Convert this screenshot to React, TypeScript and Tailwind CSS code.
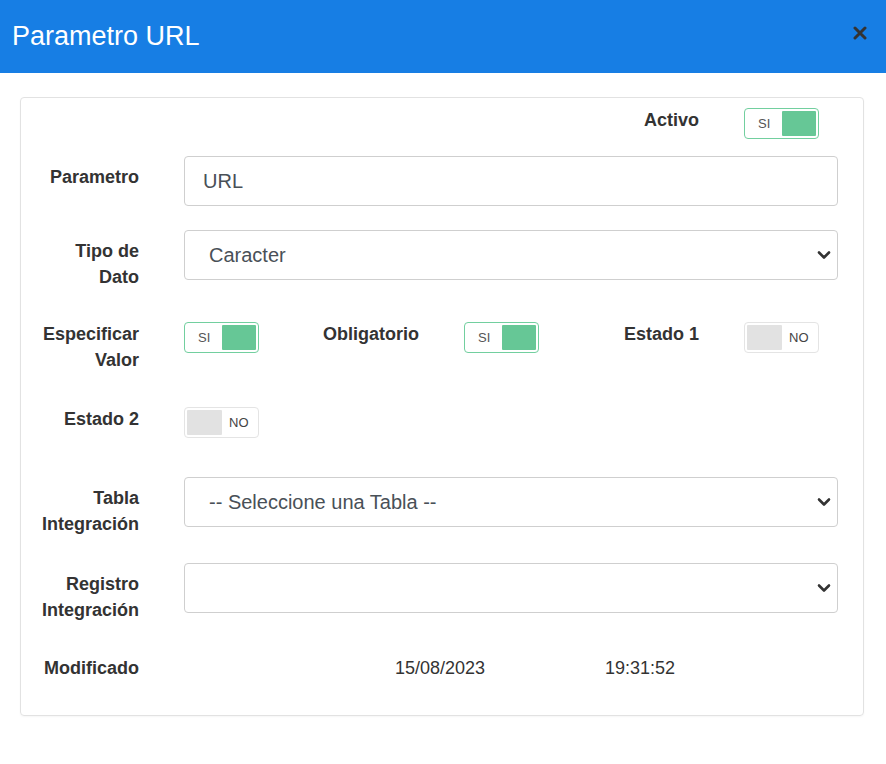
import React from "react";

const font = { fontFamily: '"Liberation Sans", Arial, sans-serif' };

const Toggle: React.FC<{ on: boolean }> = ({ on }) => {
  return on ? (
    <div className="flex w-[75px] h-[31px] shrink-0 rounded-[4px] border border-[#72cf9f] p-[2px]">
      <span className="flex-1 flex items-center justify-center text-[13px] text-[#555]">SI</span>
      <span className="flex-1 rounded-[1px] bg-[#66c796]"></span>
    </div>
  ) : (
    <div className="flex w-[75px] h-[31px] shrink-0 rounded-[4px] border border-[#e4e4e4] p-[2px]">
      <span className="flex-1 rounded-[1px] bg-[#e2e2e2]"></span>
      <span className="flex-1 flex items-center justify-center text-[13px] text-[#444]">NO</span>
    </div>
  );
};

const Label: React.FC<{ children: React.ReactNode; pad?: boolean }> = ({ children, pad }) => (
  <div
    className={
      "w-[100px] shrink-0 text-right text-[18px] leading-[26px] font-bold text-[#333] " +
      (pad ? "pt-[8px]" : "")
    }
  >
    {children}
  </div>
);

const Chevron = () => (
  <svg
    width="14"
    height="9"
    viewBox="0 0 14 9"
    className="pointer-events-none absolute right-[7px] top-1/2 -translate-y-1/2"
  >
    <path d="M2 2 L7 7 L12 2" fill="none" stroke="#333" strokeWidth="2.6" strokeLinecap="round" strokeLinejoin="round" />
  </svg>
);

const Select: React.FC<{ value: string; h?: string }> = ({ value }) => (
  <div className="relative flex-1 ml-[45px]">
    <select
      defaultValue={value}
      className="w-full h-[50px] appearance-none rounded-[4px] border border-[#cfcfcf] bg-white pl-[24px] pr-10 text-[20px] text-[#495057] outline-none"
      style={font}
    >
      <option value={value}>{value}</option>
    </select>
    <Chevron />
  </div>
);

const ToggleGroup: React.FC<{ label: React.ReactNode; on: boolean }> = ({ label, on }) => (
  <div className="flex w-[280px] shrink-0 items-start">
    <Label>{label}</Label>
    <div className="ml-[45px] mt-[1px]">
      <Toggle on={on} />
    </div>
  </div>
);

export default function App() {
  return (
    <div className="min-h-[764px] bg-white" style={font}>
      <header className="flex h-[73px] items-center justify-between bg-[#177ee4] pl-[12px] pr-[19px]">
        <h1 className="text-[27px] text-white">Parametro URL</h1>
        <svg width="14" height="14" viewBox="0 0 14 14" className="-mt-[7px]">
          <path d="M2 2 L12 12 M12 2 L2 12" stroke="#333" strokeWidth="3" strokeLinecap="round" />
        </svg>
      </header>

      <div className="ml-[20px] mr-[22px] mt-[24px] rounded-[4px] border border-[#e2e2e2] pl-[18px] pr-[25px] pt-[9px] pb-[34px] shadow-[0_1px_2px_rgba(0,0,0,0.04)]">
        <div className="flex">
          <div className="w-[560px] shrink-0"></div>
          <ToggleGroup label="Activo" on={true} />
        </div>

        <div className="mt-[17px] flex items-start">
          <Label pad>Parametro</Label>
          <input
            defaultValue="URL"
            className="ml-[45px] h-[50px] flex-1 rounded-[4px] border border-[#cfcfcf] pl-[18px] text-[20px] text-[#495057] outline-none"
            style={font}
          />
        </div>

        <div className="mt-[24px] flex items-start">
          <Label pad>Tipo de Dato</Label>
          <Select value="Caracter" />
        </div>

        <div className="mt-[31px] flex items-start">
          <ToggleGroup label="Especificar Valor" on={true} />
          <ToggleGroup label="Obligatorio" on={true} />
          <ToggleGroup label="Estado 1" on={false} />
        </div>

        <div className="mt-[33px] flex items-start">
          <ToggleGroup label="Estado 2" on={false} />
        </div>

        <div className="mt-[39px] flex items-start">
          <Label pad>Tabla Integración</Label>
          <Select value="-- Seleccione una Tabla --" />
        </div>

        <div className="mt-[26px] flex items-start">
          <Label pad>Registro Integración</Label>
          <Select value="" />
        </div>

        <div className="mt-[32px] flex items-start text-[18px] leading-[26px] text-[#333]">
          <Label>Modificado</Label>
          <span className="ml-[256px] w-[210px] shrink-0">15/08/2023</span>
          <span>19:31:52</span>
        </div>
      </div>
    </div>
  );
}
